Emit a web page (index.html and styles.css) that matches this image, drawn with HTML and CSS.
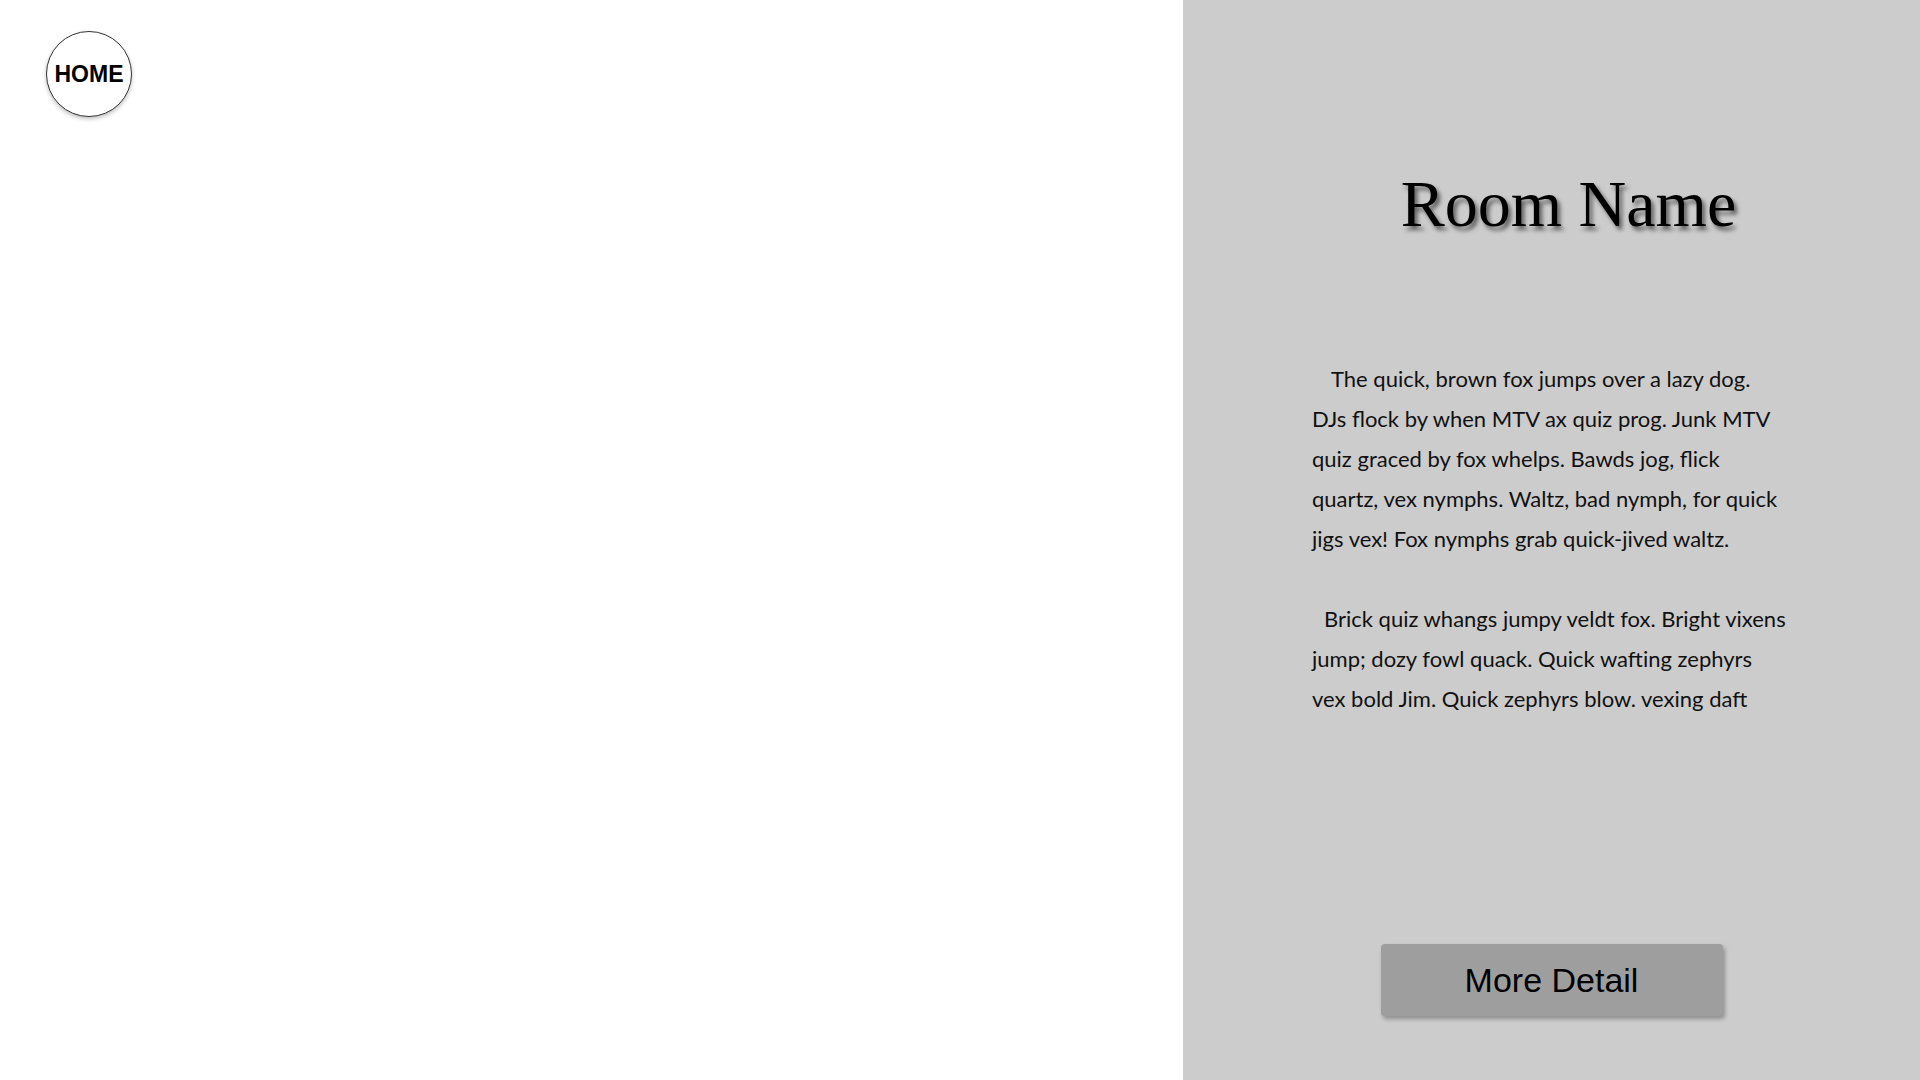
FILE: index.html
```html
<!DOCTYPE html>
<html>
<head>
<meta charset="utf-8">
<link rel="stylesheet" href="styles.css">
</head>
<body>
<div class="page">
  <div class="left">
    <div class="home">HOME</div>
  </div>
  <div class="panel">
    <h1 class="title">Room Name</h1>
    <div class="desc">
      <p class="p1">The quick, brown fox jumps over a lazy dog. DJs flock by when MTV ax quiz prog. Junk MTV quiz graced by fox whelps. Bawds jog, flick quartz, vex nymphs. Waltz, bad nymph, for quick jigs vex! Fox nymphs grab quick-jived waltz.</p>
      <p class="p2">Brick quiz whangs jumpy veldt fox. Bright vixens jump; dozy fowl quack. Quick wafting zephyrs vex bold Jim. Quick zephyrs blow. vexing daft</p>
    </div>
    <div class="btn">More Detail</div>
  </div>
</div>
</body>
</html>
```
FILE: styles.css
```css
html, body {
  margin: 0;
  padding: 0;
  background: #ffffff;
}
.page {
  display: flex;
  width: 1920px;
  height: 1080px;
  overflow: hidden;
}
.left {
  flex: 1;
  padding: 31px 0 0 46px;
}
.home {
  width: 86px;
  height: 86px;
  border: 1px solid #333;
  border-radius: 50%;
  box-sizing: border-box;
  display: flex;
  align-items: center;
  justify-content: center;
  font-family: "Liberation Sans", Arial, sans-serif;
  font-weight: bold;
  font-size: 23px;
  color: #000;
  box-shadow: 0 2px 4px rgba(0,0,0,0.25);
  background: #fff;
}
.panel {
  width: 737px;
  background: #cccccc;
  display: flex;
  flex-direction: column;
}
.title {
  margin: 166px 0 0 0;
  padding-left: 34px;
  text-align: center;
  font-family: "Liberation Serif", "Times New Roman", serif;
  font-weight: normal;
  font-size: 66px;
  line-height: 76px;
  color: #000;
  text-shadow: 3px 4px 4px rgba(0,0,0,0.55);
}
.desc {
  margin: 117px 0 0 129px;
  width: 476px;
  font-family: Lato, "Noto Sans", sans-serif;
  font-size: 22px;
  line-height: 40px;
  color: #111;
}
.desc p {
  margin: 0;
}
.p1 {
  text-indent: 19px;
  margin-bottom: 40px !important;
}
.p2 {
  text-indent: 12px;
}
.btn {
  margin: auto auto 64px auto;
  width: 342px;
  height: 72px;
  background: #9e9e9e;
  border-radius: 4px;
  box-shadow: 2px 3px 4px rgba(0,0,0,0.3);
  display: flex;
  align-items: center;
  justify-content: center;
  font-family: "Liberation Sans", Arial, sans-serif;
  font-size: 34px;
  color: #000;
}
```
